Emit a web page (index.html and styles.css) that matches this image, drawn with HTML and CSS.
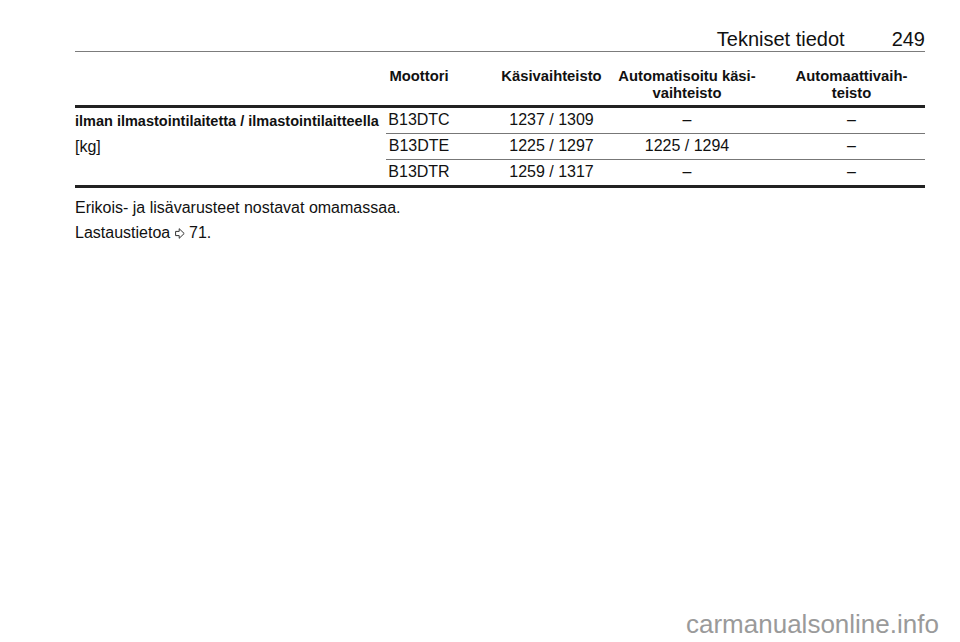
FILE: index.html
```html
<!DOCTYPE html>
<html lang="fi">
<head>
<meta charset="utf-8">
<title>Tekniset tiedot 249</title>
<link rel="stylesheet" href="styles.css">
</head>
<body>
<div class="page">
  <header class="page-head">
    <span class="title">Tekniset tiedot</span>
    <span class="pno">249</span>
  </header>

  <div class="spec">
    <div class="th lbl"></div>
    <div class="th c2">Moottori</div>
    <div class="th c3">Käsivaihteisto</div>
    <div class="th c4">Automatisoitu käsi-<br>vaihteisto</div>
    <div class="th c5">Automaattivaih-<br>teisto</div>

    <div class="lblcell"><strong>ilman ilmastointilaitetta / ilmastointilaitteella</strong><br>[kg]</div>

    <div class="td c2 sep">B13DTC</div>
    <div class="td c3 sep">1237 / 1309</div>
    <div class="td c4 sep">–</div>
    <div class="td c5 sep">–</div>

    <div class="td c2 sep">B13DTE</div>
    <div class="td c3 sep">1225 / 1297</div>
    <div class="td c4 sep">1225 / 1294</div>
    <div class="td c5 sep">–</div>

    <div class="td c2">B13DTR</div>
    <div class="td c3">1259 / 1317</div>
    <div class="td c4">–</div>
    <div class="td c5">–</div>
  </div>

  <p class="note">Erikois- ja lisävarusteet nostavat omamassaa.</p>
  <p class="note">Lastaustietoa <svg class="ref" width="10" height="11" viewBox="0 0 10 11"><path d="M0.6 3.4 H4.2 V0.7 L9.2 5.5 L4.2 10.3 V7.6 H0.6 Z" fill="none" stroke="#333" stroke-width="1" stroke-linejoin="miter"/></svg> 71.</p>
</div>
<div class="watermark">carmanualsonline.info</div>
</body>
</html>
```

FILE: styles.css
```css
html, body {
  margin: 0;
  padding: 0;
  background: #fff;
}

body {
  font-family: "Liberation Sans", Arial, Helvetica, sans-serif;
  color: #111;
  width: 960px;
  height: 642px;
  position: relative;
  overflow: hidden;
}

.page {
  width: 850px;
  padding-left: 75px;
}

.page-head {
  display: flex;
  justify-content: flex-end;
  gap: 47px;
  margin-top: 28px;
  padding-bottom: 0;
  font-size: 20px;
  line-height: 23px;
  border-bottom: 1.5px solid #7c7c7c;
}

.spec {
  display: grid;
  grid-template-columns: 311px 66px 158px 160px 155px;
  width: 850px;
  border-bottom: 3px solid #222;
  font-size: 16px;
}

.th {
  font-weight: bold;
  font-size: 14.8px;
  line-height: 17px;
  padding-top: 16px;
  padding-bottom: 2.5px;
  border-bottom: 3px solid #222;
  text-align: center;
}

.lblcell {
  grid-column: 1;
  grid-row: 2 / span 3;
  font-size: 16px;
  line-height: 25px;
  padding-top: 0.5px;
}

.lblcell strong {
  font-size: 14.5px;
}

.td {
  line-height: 24.5px;
  text-align: center;
  padding-top: 0.5px;
}

.sep {
  border-bottom: 1.5px solid #777;
}

.c2 { grid-column: 2; }
.c3 { grid-column: 3; padding-left: 41px; }
.c4 { grid-column: 4; padding-right: 6px; }
.c5 { grid-column: 5; padding-left: 8px; }

.note {
  margin: 0;
  font-size: 16px;
  line-height: 25px;
}

.spec + .note {
  margin-top: 7.5px;
}

.ref {
  vertical-align: -1px;
}

.watermark {
  position: absolute;
  left: 686px;
  top: 609px;
  font-size: 26px;
  line-height: 30px;
  color: #9a9a9a;
}
```
